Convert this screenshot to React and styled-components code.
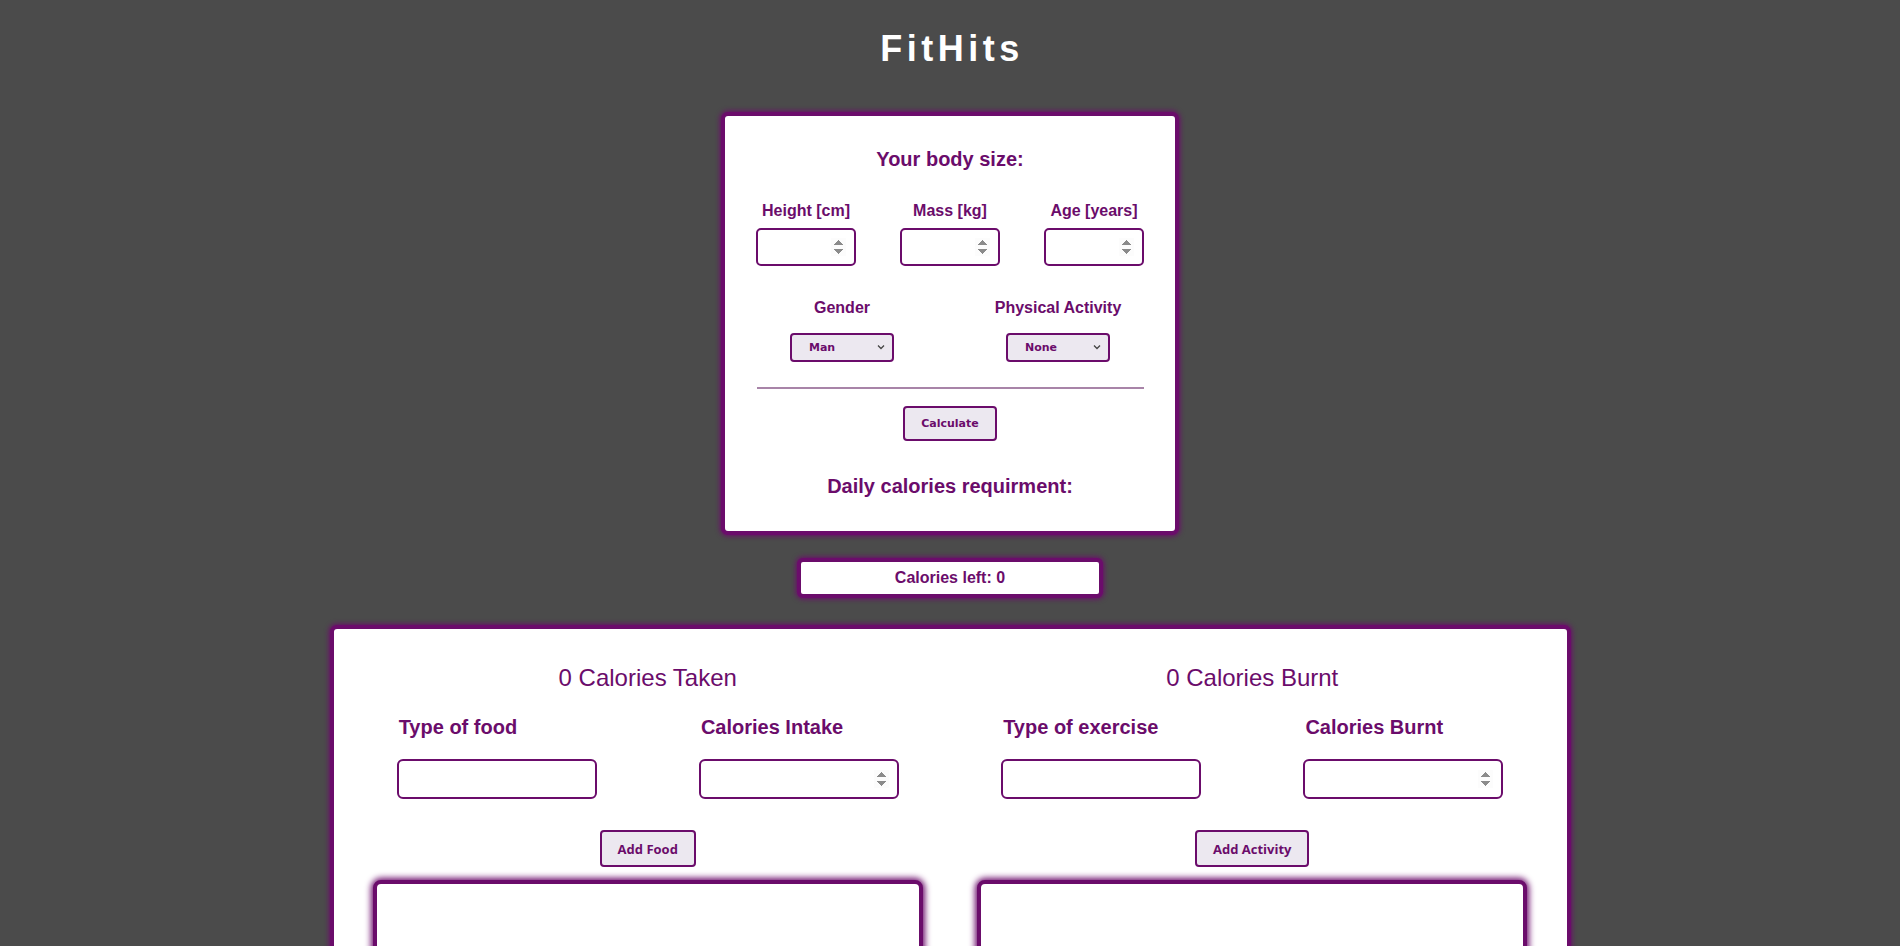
import React from "react";
import styled, { createGlobalStyle } from "styled-components";

const purple = "#6b0c6b";

const GlobalStyle = createGlobalStyle`
  html, body {
    margin: 0;
    padding: 0;
    background: #4b4b4b;
    font-family: "Liberation Sans", Arial, sans-serif;
  }
`;

const Page = styled.div`
  display: flex;
  flex-direction: column;
  align-items: center;
  padding-top: 28px;
  min-height: 946px;
  box-sizing: border-box;
`;

const Title = styled.h1`
  margin: 0 0 42px;
  color: #fff;
  font-size: 36px;
  line-height: 42px;
  font-weight: bold;
  letter-spacing: 4.5px;
  padding-left: 4px;
`;

const Card = styled.div`
  box-sizing: border-box;
  width: ${(p) => p.width}px;
  background: #fff;
  border: 4px solid ${purple};
  border-radius: 7px;
  box-shadow: 0 0 5px 1px ${purple};
`;

const BodyCard = styled(Card)`
  padding: 31px 9px 33px;
  display: flex;
  flex-direction: column;
  align-items: center;
`;

const Heading = styled.h3`
  margin: 0;
  color: ${purple};
  font-size: 20px;
  line-height: 24px;
  font-weight: bold;
  text-align: center;
`;

const FieldRow = styled.div`
  width: 100%;
  display: grid;
  grid-template-columns: repeat(${(p) => p.cols}, 1fr);
  margin-top: ${(p) => p.top}px;
`;

const Field = styled.div`
  display: flex;
  flex-direction: column;
  align-items: center;
  gap: ${(p) => p.gap}px;
`;

const Label = styled.label`
  color: ${purple};
  font-size: 16px;
  line-height: 18px;
  font-weight: bold;
`;

const NumberInput = styled.input`
  box-sizing: border-box;
  width: ${(p) => p.w}px;
  height: ${(p) => p.h}px;
  border: 2px solid ${purple};
  border-radius: 5px;
  background: #fff;
  padding: 0 8px;
  font-size: 16px;
  outline: none;
  &::-webkit-inner-spin-button {
    opacity: 1;
  }
`;

const SelectWrap = styled.div`
  position: relative;
  width: 104px;
  height: 29px;
`;

const Select = styled.select`
  appearance: none;
  box-sizing: border-box;
  width: 100%;
  height: 100%;
  border: 2px solid ${purple};
  border-radius: 4px;
  background: #ece8f0;
  color: ${purple};
  font-family: "DejaVu Sans", Verdana, sans-serif;
  font-weight: bold;
  font-size: 11px;
  padding: 0 0 0 17px;
  outline: none;
`;

const Chevron = styled.svg`
  position: absolute;
  right: 9px;
  top: 11px;
  width: 8px;
  height: 6px;
  pointer-events: none;
`;

const Rule = styled.hr`
  width: 387px;
  margin: 25px 0 0;
  border: none;
  border-top: 2px solid #a884a8;
`;

const Button = styled.button`
  box-sizing: border-box;
  flex-shrink: 0;
  height: ${(p) => p.h}px;
  padding: 0 ${(p) => p.px}px;
  margin-top: ${(p) => p.top}px;
  border: 2px solid ${purple};
  border-radius: 4px;
  background: #ece8f0;
  color: ${purple};
  font-family: ${(p) => p.font};
  font-weight: bold;
  font-size: ${(p) => p.size}px;
  cursor: pointer;
`;

const Result = styled(Heading)`
  margin-top: 33px;
`;

const LeftBox = styled(Card)`
  margin-top: 23px;
  height: 40px;
  display: flex;
  align-items: center;
  justify-content: center;
  color: ${purple};
  font-size: 16px;
  font-weight: bold;
  border-radius: 6px;
`;

const TrackerCard = styled(Card)`
  margin-top: 27px;
  padding: 0 12px 30px;
  display: flex;
`;

const Half = styled.section`
  flex: 1;
  display: flex;
  flex-direction: column;
  align-items: center;
  padding-top: 35px;
`;

const Total = styled.h2`
  margin: 0;
  color: ${purple};
  font-size: 24px;
  line-height: 28px;
  font-weight: normal;
`;

const PairRow = styled.div`
  width: 100%;
  display: flex;
  justify-content: space-around;
  margin-top: 23px;
`;

const EntryField = styled.div`
  width: 200px;
  display: flex;
  flex-direction: column;
  gap: 20px;
`;

const EntryLabel = styled.label`
  color: ${purple};
  font-size: 20px;
  line-height: 24px;
  font-weight: bold;
  padding-left: 2px;
`;

const TextInput = styled(NumberInput)`
  border-radius: 6px;
`;

const ListBox = styled.div`
  box-sizing: border-box;
  flex-shrink: 0;
  width: 550px;
  height: 220px;
  margin-top: 13px;
  border: 4px solid ${purple};
  border-radius: 8px;
  background: #fff;
  box-shadow: 0 0 6px 2px ${purple};
`;

const ChevronIcon = () => (
  <Chevron viewBox="0 0 8 6">
    <path d="M1 1.5 L4 4.5 L7 1.5" fill="none" stroke="#444" strokeWidth="1.3" />
  </Chevron>
);

const Dropdown = ({ options }) => (
  <SelectWrap>
    <Select defaultValue={options[0]}>
      {options.map((o) => (
        <option key={o}>{o}</option>
      ))}
    </Select>
    <ChevronIcon />
  </SelectWrap>
);

const Tracker = ({ total, first, second, action }) => (
  <Half>
    <Total>{total}</Total>
    <PairRow>
      <EntryField>
        <EntryLabel>{first}</EntryLabel>
        <TextInput type="text" w={200} h={40} />
      </EntryField>
      <EntryField>
        <EntryLabel>{second}</EntryLabel>
        <TextInput type="number" w={200} h={40} />
      </EntryField>
    </PairRow>
    <Button
      h={37}
      px={16}
      top={31}
      size={13}
      font={'"Open Sans", "Noto Sans", sans-serif'}
    >
      {action}
    </Button>
    <ListBox />
  </Half>
);

export default function App() {
  return (
    <>
      <GlobalStyle />
      <Page>
        <Title>FitHits</Title>
        <BodyCard width={458}>
          <Heading>Your body size:</Heading>
          <FieldRow cols={3} top={31}>
            <Field gap={8}>
              <Label>Height [cm]</Label>
              <NumberInput type="number" w={100} h={38} />
            </Field>
            <Field gap={8}>
              <Label>Mass [kg]</Label>
              <NumberInput type="number" w={100} h={38} />
            </Field>
            <Field gap={8}>
              <Label>Age [years]</Label>
              <NumberInput type="number" w={100} h={38} />
            </Field>
          </FieldRow>
          <FieldRow cols={2} top={33}>
            <Field gap={16}>
              <Label>Gender</Label>
              <Dropdown options={["Man", "Woman"]} />
            </Field>
            <Field gap={16}>
              <Label>Physical Activity</Label>
              <Dropdown options={["None", "Low", "Medium", "High"]} />
            </Field>
          </FieldRow>
          <Rule />
          <Button
            h={35}
            px={16}
            top={17}
            size={11}
            font={'"DejaVu Sans", Verdana, sans-serif'}
          >
            Calculate
          </Button>
          <Result>Daily calories requirment:</Result>
        </BodyCard>
        <LeftBox width={306}>Calories left: 0</LeftBox>
        <TrackerCard width={1241}>
          <Tracker
            total="0 Calories Taken"
            first="Type of food"
            second="Calories Intake"
            action="Add Food"
          />
          <Tracker
            total="0 Calories Burnt"
            first="Type of exercise"
            second="Calories Burnt"
            action="Add Activity"
          />
        </TrackerCard>
      </Page>
    </>
  );
}
